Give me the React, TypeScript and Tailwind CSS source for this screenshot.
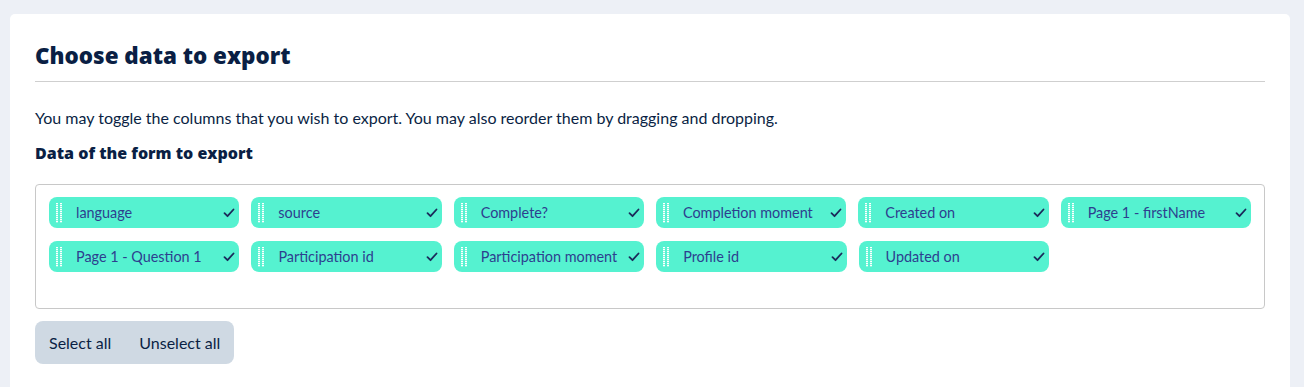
import React from "react";

const row1 = ["language", "source", "Complete?", "Completion moment", "Created on", "Page 1 - firstName"];
const row2 = ["Page 1 - Question 1", "Participation id", "Participation moment", "Profile id", "Updated on"];

function Handle() {
  return (
    <svg width="6" height="20" viewBox="0 0 6 20" className="shrink-0">
      {Array.from({ length: 10 }).map((_, i) => (
        <g key={i}>
          <rect x="0" y={i * 2} width="2" height="1.3" fill="#ffffff" />
          <rect x="4" y={i * 2} width="2" height="1.3" fill="#ffffff" />
        </g>
      ))}
    </svg>
  );
}

function Check() {
  return (
    <svg width="12" height="10" viewBox="0 0 12 10" className="shrink-0">
      <path d="M1.5 5.2 L4.5 8.2 L10.5 1.5" fill="none" stroke="#1b2a5a" strokeWidth="1.8" strokeLinecap="round" strokeLinejoin="round" />
    </svg>
  );
}

function Chip({ label }: { label: string }) {
  return (
    <div className="flex h-[31px] w-[190.4px] items-center rounded-[8px] bg-[#55f2d0] pl-[7px] pr-[4px]">
      <Handle />
      <span className="ml-[14px] flex-1 truncate text-[14.4px] text-[#2d3f8f]">{label}</span>
      <Check />
    </div>
  );
}

export default function App() {
  return (
    <div className="min-h-[387px] bg-[#edf0f6] pl-[10px] pr-[14px] pt-[14px]" style={{ fontFamily: '"Lato", "Open Sans", sans-serif' }}>
      <div className="min-h-[373px] rounded-t-[5px] bg-white px-[25px] pt-[30px]">
        <h1 className="text-[22.4px] leading-[24px] text-[#0a1f44]" style={{ fontFamily: '"Open Sans", sans-serif', fontWeight: 800 }}>
          Choose data to export
        </h1>
        <div className="mt-[13px] h-px bg-[#cfcfcf]" />
        <p className="mt-[26px] text-[16px] leading-[20px] text-[#0a1f44]">
          You may toggle the columns that you wish to export. You may also reorder them by dragging and dropping.
        </p>
        <h2 className="mt-[14px] text-[16px] leading-[22px] text-[#0a1f44]" style={{ fontFamily: '"Open Sans", sans-serif', fontWeight: 800 }}>
          Data of the form to export
        </h2>
        <div className="mt-[20px] h-[125px] rounded-[4px] border border-[#c8c8c8] px-[13px] pt-[12px]">
          <div className="flex flex-col gap-[13px]">
            <div className="flex gap-[12px]">
              {row1.map((l) => (
                <Chip key={l} label={l} />
              ))}
            </div>
            <div className="flex gap-[12px]">
              {row2.map((l) => (
                <Chip key={l} label={l} />
              ))}
            </div>
          </div>
        </div>
        <div className="mt-[12px] inline-flex h-[43px] items-center gap-[28px] rounded-[8px] bg-[#cfd9e3] px-[14px] text-[16px] text-[#0a1f44]">
          <span>Select all</span>
          <span>Unselect all</span>
        </div>
      </div>
    </div>
  );
}
